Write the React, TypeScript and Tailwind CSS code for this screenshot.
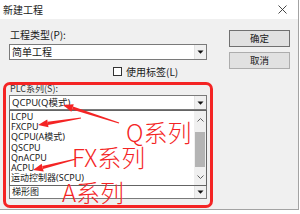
import React from "react";

const ui = { fontFamily: "'Noto Sans', 'Noto Sans CJK SC', sans-serif" };
const cjk = { fontFamily: "'Noto Sans CJK SC', 'Noto Sans', sans-serif" };

function Arrow({ tip, tail }: { tip: [number, number]; tail: [number, number] }) {
  const [x1, y1] = tip;
  const [x2, y2] = tail;
  const dx = x2 - x1;
  const dy = y2 - y1;
  const len = Math.hypot(dx, dy);
  const ux = dx / len;
  const uy = dy / len;
  const px = -uy;
  const py = ux;
  const hl = 10;
  const hw = 4;
  const bx = x1 + ux * hl;
  const by = y1 + uy * hl;
  const head = `${x1},${y1} ${bx + px * hw},${by + py * hw} ${bx - px * hw},${by - py * hw}`;
  const body = `${bx + px * 1.6},${by + py * 1.6} ${x2 + px * 0.6},${y2 + py * 0.6} ${x2 - px * 0.6},${y2 - py * 0.6} ${bx - px * 1.6},${by - py * 1.6}`;
  return (
    <g fill="#f42424">
      <polygon points={head} />
      <polygon points={body} />
    </g>
  );
}

function ComboArrow() {
  return (
    <div className="w-[12px] h-full flex items-center justify-center bg-[#f0f0f0] border-l border-[#e3e3e3]">
      <svg width="7" height="4" viewBox="0 0 7 4">
        <polygon points="0.5,0.5 6.5,0.5 3.5,3.8" fill="#111" />
      </svg>
    </div>
  );
}

export default function App() {
  const items = ["LCPU", "FXCPU", "QCPU(A模式)", "QSCPU", "QnACPU", "ACPU", "运动控制器(SCPU)"];
  return (
    <div className="relative w-[300px] h-[214px] overflow-hidden bg-white text-[#1a1a1a]" style={ui}>
      <div className="w-[299px] h-[210px] flex flex-col border-r border-b border-[#a3a3a3]">
        <div className="h-[19px] flex items-center justify-between pl-[3px] pr-[11px] bg-white">
          <span className="text-[10px] leading-[12px]" style={cjk}>新建工程</span>
          <svg width="9" height="9" viewBox="0 0 9 9">
            <path d="M0.5 0.5 L8.5 8.5 M8.5 0.5 L0.5 8.5" stroke="#333" strokeWidth="0.9" />
          </svg>
        </div>
        <div className="flex-1 bg-[#f0f0f0] flex pl-[9px] pt-[9px]">
          <div className="w-[198px] flex flex-col">
            <div className="h-[14px] text-[10px] leading-[14px] pl-[1px]" style={cjk}>工程类型(P):</div>
            <div className="mt-[2px] h-[16px] flex bg-white border border-[#7a7a7a]">
              <div className="flex-1 pl-[2px] text-[10px] leading-[14px]" style={cjk}>简单工程</div>
              <ComboArrow />
            </div>
            <div className="mt-[6px] h-[11px] flex items-center pl-[104px]">
              <div className="w-[9px] h-[9px] bg-white border border-[#333]" />
              <span className="ml-[4px] text-[10px] leading-[11px]" style={cjk}>使用标签(L)</span>
            </div>
            <div className="mt-[6px] h-[12px] text-[9px] leading-[12px] pl-[1px] text-[#333]" style={cjk}>PLC系列(S):</div>
            <div className="h-[15px] flex bg-white border border-[#7a7a7a]">
              <div className="flex-1 pl-[2px] text-[9.5px] leading-[13px]" style={ui}>QCPU(Q模式)</div>
              <ComboArrow />
            </div>
            <div className="h-[76px] flex bg-white border border-[#646464]">
              <div className="flex-1 pt-[1px] pl-[1px] flex flex-col overflow-hidden">
                {items.map((t) => (
                  <div key={t} className="h-[10.2px] leading-[10.2px] text-[9px] whitespace-nowrap" style={ui}>
                    {t}
                  </div>
                ))}
              </div>
              <div className="w-[12px] flex flex-col bg-[#f0f0f0]">
                <div className="h-[17px] flex items-center justify-center">
                  <svg width="7" height="4" viewBox="0 0 7 4">
                    <path d="M0.5 3.5 L3.5 0.5 L6.5 3.5" stroke="#606060" strokeWidth="1" fill="none" />
                  </svg>
                </div>
                <div className="mt-[4px] mx-[1px] h-[35px] bg-[#b4b4b4]" />
                <div className="flex-1" />
                <div className="h-[17px] flex items-center justify-center">
                  <svg width="7" height="4" viewBox="0 0 7 4">
                    <path d="M0.5 0.5 L3.5 3.5 L6.5 0.5" stroke="#606060" strokeWidth="1" fill="none" />
                  </svg>
                </div>
              </div>
            </div>
            <div className="h-[13px] flex bg-white border border-t-0 border-[#7a7a7a]">
              <div className="flex-1 pl-[2px] text-[9px] leading-[12px]" style={cjk}>梯形图</div>
              <ComboArrow />
            </div>
          </div>
          <div className="ml-[22px] pt-[2px] flex flex-col gap-[5px]">
            <div className="w-[61px] h-[17px] flex items-center justify-center bg-[#e1e1e1] border border-[#707070] text-[9.5px]" style={cjk}>
              确定
            </div>
            <div className="w-[61px] h-[17px] flex items-center justify-center bg-[#e1e1e1] border border-[#adadad] text-[9.5px]" style={cjk}>
              取消
            </div>
          </div>
        </div>
      </div>

      <div className="absolute left-[3px] top-[82px] w-[210px] h-[126px] border-[3px] border-[#f42424] rounded-[7px]" />
      <svg className="absolute left-0 top-0" width="300" height="214">
        <Arrow tip={[63, 105]} tail={[119, 123]} />
        <Arrow tip={[38, 125]} tail={[81, 118]} />
        <Arrow tip={[33, 170]} tail={[76, 159]} />
      </svg>
      <div className="absolute left-[126px] top-[118px] text-[24px] leading-[28px] font-light text-[#f42424] whitespace-nowrap" style={cjk}>Q系列</div>
      <div className="absolute left-[72px] top-[143px] text-[24px] leading-[28px] font-light text-[#f42424] whitespace-nowrap" style={cjk}>FX系列</div>
      <div className="absolute left-[62px] top-[178px] text-[24px] leading-[28px] font-light text-[#f42424] whitespace-nowrap" style={cjk}>A系列</div>
    </div>
  );
}
